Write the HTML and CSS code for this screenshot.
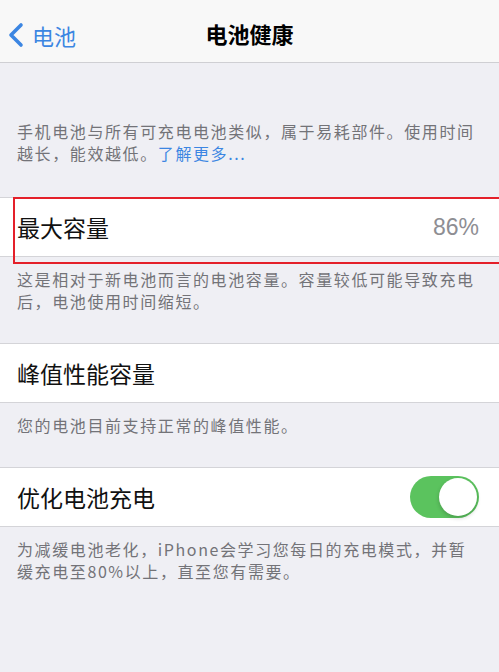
FILE: index.html
```html
<!DOCTYPE html>
<html lang="zh-CN">
<head>
    <meta charset="UTF-8">
    <title>电池健康</title>
    <link rel="stylesheet" href="styles.css">
</head>
<body>
<div class="nav">
    <a class="back">
        <svg class="chev" width="18" height="26" viewBox="0 0 18 26">
            <polyline points="14,3 4,13 14,23" fill="none" stroke="#3c86e2" stroke-width="3.6" stroke-linecap="round" stroke-linejoin="round"/>
        </svg>
        <span>电池</span>
    </a>
    <div class="title">电池健康</div>
</div>

<div class="note first">手机电池与所有可充电电池类似，属于易耗部件。使用时间<br>越长，能效越低。<span class="link">了解更多...</span></div>

<div class="row mark">
    <span class="label">最大容量</span>
    <span class="value">86%</span>
    <div class="redbox"></div>
</div>
<div class="note">这是相对于新电池而言的电池容量。容量较低可能导致充电<br>后，电池使用时间缩短。</div>

<div class="row">
    <span class="label">峰值性能容量</span>
</div>
<div class="note">您的电池目前支持正常的峰值性能。</div>

<div class="row">
    <span class="label">优化电池充电</span>
    <div class="switch"><div class="knob"></div></div>
</div>
<div class="note">为减缓电池老化，iPhone会学习您每日的充电模式，并暂<br>缓充电至80%以上，直至您有需要。</div>
</body>
</html>
```

FILE: styles.css
```css
*{
    margin: 0;
    padding: 0;
    box-sizing: border-box;
}
body{
    width: 499px;
    min-height: 672px;
    background: #efeff4;
    font-family: "Noto Sans CJK SC", "Liberation Sans", sans-serif;
    overflow: hidden;
}
.nav{
    height: 63px;
    background: #f8f8f8;
    border-bottom: 1px solid #cfcfd3;
    position: relative;
    display: flex;
    align-items: center;
    justify-content: center;
}
.back{
    position: absolute;
    left: 7px;
    top: 20px;
    display: flex;
    align-items: center;
    color: #3c86e2;
    font-size: 22px;
    line-height: 30px;
}
.back span{
    margin-left: 7px;
}
.title{
    font-size: 22px;
    font-weight: 600;
    color: #000;
    margin-top: 4px;
}
.note{
    padding: 11px 17px 31px;
    font-size: 16px;
    line-height: 22px;
    letter-spacing: 1.6px;
    color: #737378;
}
.note.first{
    padding-top: 57px;
    padding-bottom: 33px;
}
.link{
    color: #3c86e2;
}
.row{
    height: 60px;
    background: #fff;
    border-top: 1px solid #d4d4d8;
    border-bottom: 1px solid #d4d4d8;
    padding: 0 20px 0 17px;
    display: flex;
    align-items: center;
    justify-content: space-between;
}
.mark{
    position: relative;
}
.label{
    font-size: 23px;
    color: #111;
}
.value{
    font-family: "Liberation Sans", sans-serif;
    font-size: 23px;
    color: #8e8e93;
}
.redbox{
    position: absolute;
    left: 13px;
    top: -1px;
    right: -4px;
    height: 67px;
    border: 2px solid #e4202a;
}
.switch{
    width: 69px;
    height: 42px;
    border-radius: 21px;
    background: #5bc35e;
    position: relative;
}
.knob{
    position: absolute;
    right: 2px;
    top: 2px;
    width: 38px;
    height: 38px;
    border-radius: 50%;
    background: #fff;
    box-shadow: 0 2px 4px rgba(0,0,0,0.2);
}
```
